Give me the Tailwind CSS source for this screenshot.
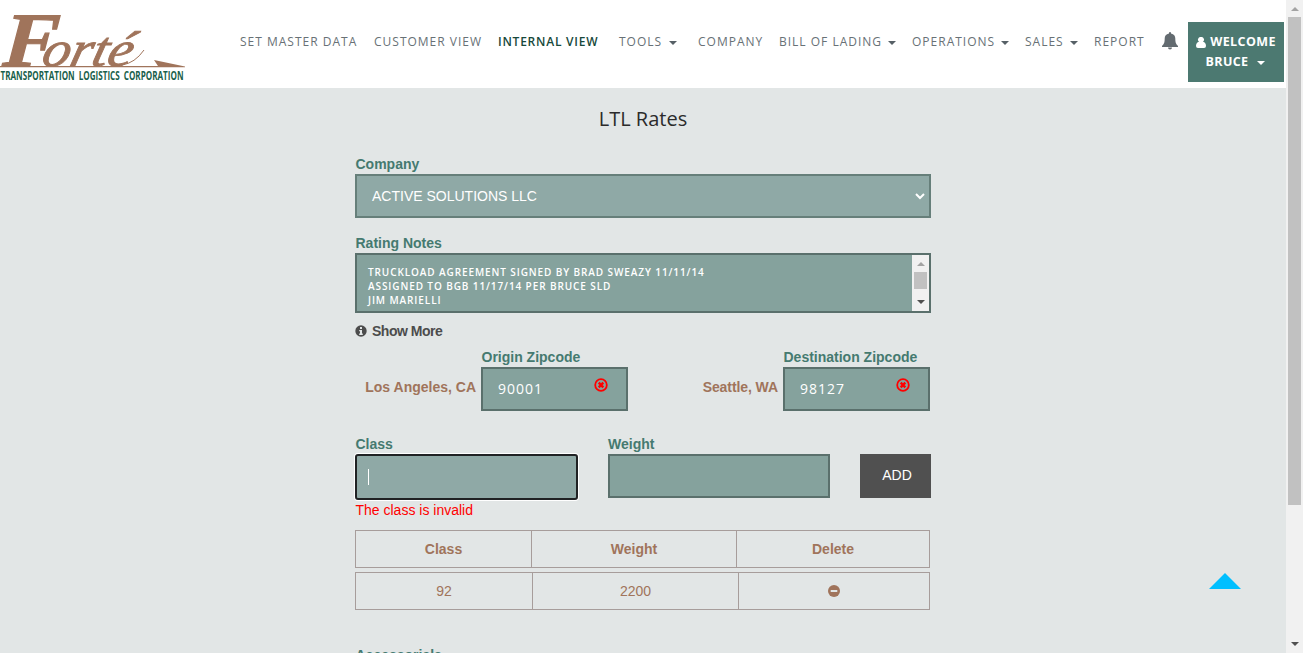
<!DOCTYPE html>
<html lang="en">
<head>
<meta charset="utf-8">
<title>LTL Rates</title>
<script src="https://cdn.jsdelivr.net/npm/@tailwindcss/browser@4"></script>
</head>
<body class="h-[653px] w-[1303px] overflow-hidden bg-[#e2e6e6] flex font-['Liberation_Sans',sans-serif] text-sm">
<div class="relative w-[1286px] h-[653px] overflow-hidden flex flex-col">
  <header class="h-[88px] shrink-0 bg-white flex items-start">
    <svg class="w-[240px] h-[88px] shrink-0" viewBox="0 0 240 88" role="img" aria-label="Forté Transportation Logistics Corporation">
      <g fill="#a0745b" font-family="'Liberation Serif',serif" font-style="italic">
        <text transform="translate(2 66) skewX(-4)" font-size="77" font-weight="bold" textLength="56" lengthAdjust="spacingAndGlyphs" stroke="#a0745b" stroke-width="1.200">F</text>
        <text transform="translate(40 66) skewX(-14)" font-size="50" textLength="90" lengthAdjust="spacingAndGlyphs" stroke="#a0745b" stroke-width="0.900">orté</text>
        <path d="M0 66h158l-4-6 31 6.600v.6H0z"/>
        <path d="M122 65q13-2 22-15" fill="none" stroke="#a0745b"/>
      </g>
      <text x="0.500" y="79.500" font-family="'Open Sans',sans-serif" font-weight="bold" font-size="12.500" fill="#1a5f4c" textLength="183" lengthAdjust="spacingAndGlyphs" word-spacing="3">TRANSPORTATION LOGISTICS CORPORATION</text>
    </svg>
    <nav class="flex items-start pt-[32px] h-[88px] text-[12px] leading-[20px] tracking-[1px] text-[#687176] font-['Open_Sans',sans-serif] whitespace-nowrap">
      <a class="w-[134px]">SET MASTER DATA</a>
      <a class="w-[124px]">CUSTOMER VIEW</a>
      <a class="w-[121px] font-semibold tracking-[0.770px] text-[#17493b]">INTERNAL VIEW</a>
      <a class="w-[79px] flex items-center gap-[7px]">TOOLS <i class="mt-[2px] border-x-4 border-x-transparent border-t-4 border-t-[#566066]"></i></a>
      <a class="w-[81px]">COMPANY</a>
      <a class="w-[133px] flex items-center gap-[6px]">BILL OF LADING <i class="mt-[2px] border-x-4 border-x-transparent border-t-4 border-t-[#566066]"></i></a>
      <a class="w-[113px] flex items-center gap-[6px]">OPERATIONS <i class="mt-[2px] border-x-4 border-x-transparent border-t-4 border-t-[#566066]"></i></a>
      <a class="w-[69px] flex items-center gap-[6px]">SALES <i class="mt-[2px] border-x-4 border-x-transparent border-t-4 border-t-[#566066]"></i></a>
      <a class="w-[68px]">REPORT</a>
      <svg class="w-4 h-[18px]" viewBox="0 0 16 18" fill="#636b70"><path d="M7 1a1 1 0 0 1 2 0v.5c3 .5 4.300 2.500 4.300 5 0 4.500 1 5.800 2.700 7.500v1H0v-1c1.700-1.700 2.700-3 2.700-7.500 0-2.500 1.300-4.500 4.300-5zM6 15.500h4a2 2 0 0 1-4 0z"/></svg>
    </nav>
    <div class="ml-[10px] mt-[22px] w-24 h-[60px] bg-[#4c7971] text-white font-bold text-[12.500px] leading-[20px] pt-[10px] font-['Open_Sans',sans-serif] tracking-[0.400px] flex flex-col items-center whitespace-nowrap">
      <div class="flex items-center gap-1"><svg class="w-[10px] h-[11px]" viewBox="0 0 10 11" fill="white"><path d="M5 0a2.700 2.700 0 0 1 2 4.800Q10 5.500 10 9q0 2-2 2H2Q0 11 0 9q0-3.500 3-4.200A2.700 2.700 0 0 1 5 0z"/></svg>WELCOME</div>
      <div class="flex items-center gap-2 pr-[2px]">BRUCE <i class="mt-px border-x-4 border-x-transparent border-t-4 border-t-white"></i></div>
    </div>
  </header>

  <main class="w-[576px] ml-[355px] flex flex-col text-[#457a70]">
    <h1 class="mt-4 h-[30px] leading-[30px] text-center text-[20px] text-[#2b2b2b] font-['Open_Sans',sans-serif]">LTL Rates</h1>
    <label class="mt-5 h-5 leading-5 pl-[0.500px] font-bold">Company</label>
    <div class="h-11 border-2 border-[#667f7a] bg-[#8fa9a6] text-white flex items-center justify-between pl-[15px] pr-1 text-[14px]">
      <span>ACTIVE SOLUTIONS LLC</span>
      <svg class="w-[10px] h-[7px]" viewBox="0 0 10 7" fill="none" stroke="white" stroke-width="2"><path d="M1 1l4 4 4-4"/></svg>
    </div>
    <label class="mt-[15px] h-5 leading-5 pl-[0.500px] font-bold">Rating Notes</label>
    <div class="h-[60px] border-2 border-[#5a706c] bg-[#85a29d] flex justify-between text-white">
      <p class="pl-[11px] pt-[10px] text-[10px] leading-[14px] tracking-[0.900px] font-semibold font-['Open_Sans',sans-serif]">TRUCKLOAD AGREEMENT SIGNED BY BRAD SWEAZY 11/11/14<br>ASSIGNED TO BGB 11/17/14 PER BRUCE SLD<br>JIM MARIELLI</p>
      <div class="w-[17px] bg-[#f1f1f1] flex flex-col items-center">
        <i class="mt-[7px] border-x-4 border-x-transparent border-b-4 border-b-[#a3a3a3]"></i>
        <span class="mt-[6px] w-[13px] h-[17px] bg-[#c1c1c1]"></span>
        <i class="mt-[11px] border-x-4 border-x-transparent border-t-4 border-t-[#505050]"></i>
      </div>
    </div>
    <div class="mt-2 h-5 flex items-center gap-[5px] font-bold tracking-[-0.500px] text-[14px] text-[#4c4c4c]">
      <svg class="w-[12px] h-[12px]" viewBox="0 0 12 12"><circle cx="6" cy="6" r="5.700" fill="#4c4c4c"/><path d="M5 2h2v2H5zM4.200 5H7v3.500h.8V10H4.200V8.500H5V6.300h-.8z" fill="#e2e6e6"/></svg>Show More
    </div>
    <div class="mt-[6px] h-16 flex font-bold">
      <span class="w-[126px] pt-[30px] pr-[5px] leading-5 text-right text-[#a0745b]">Los Angeles, CA</span>
      <div class="w-[147px] flex flex-col">
        <label class="h-5 leading-5 pl-[0.500px] whitespace-nowrap">Origin Zipcode</label>
        <div class="h-11 border-2 border-[#5a706c] bg-[#85a29d] flex pl-[15px] pr-[18px] justify-between font-normal font-['Open_Sans',sans-serif] text-white tracking-[1px] leading-[40px]">90001
          <svg class="mt-[9px] w-[14px] h-[14px]" viewBox="0 0 14 14" fill="none" stroke="red" stroke-width="2"><circle cx="7" cy="7" r="5.800" stroke-width="1.800"/><path d="M4.700 4.700l4.600 4.600M9.300 4.700L4.700 9.300" stroke-width="2.400"/></svg>
        </div>
      </div>
      <span class="w-[155px] pt-[30px] pr-[5px] leading-5 text-right tracking-[-0.080px] text-[#a0745b]">Seattle, WA</span>
      <div class="w-[147px] flex flex-col">
        <label class="h-5 leading-5 pl-[0.500px] whitespace-nowrap">Destination Zipcode</label>
        <div class="h-11 border-2 border-[#5a706c] bg-[#85a29d] flex pl-[15px] pr-[18px] justify-between font-normal font-['Open_Sans',sans-serif] text-white tracking-[1px] leading-[40px]">98127
          <svg class="mt-[9px] w-[14px] h-[14px]" viewBox="0 0 14 14" fill="none" stroke="red" stroke-width="2"><circle cx="7" cy="7" r="5.800" stroke-width="1.800"/><path d="M4.700 4.700l4.600 4.600M9.300 4.700L4.700 9.300" stroke-width="2.400"/></svg>
        </div>
      </div>
    </div>
    <div class="mt-[23px] h-[86px] flex">
      <div class="w-[223px] flex flex-col">
        <label class="h-5 leading-5 pl-[0.500px] font-bold">Class</label>
        <div class="h-[46px] border-2 border-[#202224] rounded-[3px] bg-[#8fa9a6] ring-1 ring-white flex items-center pl-[11px]"><i class="w-px h-4 bg-white"></i></div>
        <span class="h-5 leading-5 pl-[0.500px] text-[#f00]">The class is invalid</span>
      </div>
      <div class="ml-[30px] w-[222px] flex flex-col">
        <label class="h-5 leading-5 font-bold">Weight</label>
        <div class="h-11 border-2 border-[#5a706c] bg-[#85a29d]"></div>
      </div>
      <button class="ml-[30px] mt-5 w-[71px] h-11 pb-[2px] pl-[3px] bg-[#505050] text-white">ADD</button>
    </div>
    <div class="mt-[10px] w-[575px] h-[38px] border border-[#a79d9b] flex text-center font-bold leading-[36px] text-[#a0745b]">
      <span class="w-44 border-r border-[#a79d9b]">Class</span>
      <span class="w-[205px] border-r border-[#a79d9b]">Weight</span>
      <span class="flex-1">Delete</span>
    </div>
    <div class="mt-1 w-[575px] h-[38px] border border-[#a79d9b] flex text-center leading-[36px] text-[#a0745b]">
      <span class="w-[177px] border-r border-[#a79d9b]">92</span>
      <span class="w-[206px] border-r border-[#a79d9b]">2200</span>
      <span class="flex-1 flex items-center justify-center"><svg class="w-3 h-3" viewBox="0 0 12 12"><circle cx="6" cy="6" r="6" fill="#a0745b"/><path d="M2.700 5h6.600v2H2.700z" fill="#e2e6e6"/></svg></span>
    </div>
    <label class="mt-[35px] h-5 shrink-0 leading-5 pl-[0.500px] font-bold">Accessorials</label>
  </main>
  <a class="absolute left-[1209px] top-[573px] border-x-16 border-x-transparent border-b-16 border-b-[#00bfff]"></a>
</div>
<div class="w-[17px] h-[653px] bg-[#f1f1f1] flex flex-col items-center">
  <i class="mt-[7px] border-x-4 border-x-transparent border-b-4 border-b-[#a3a3a3]"></i>
  <span class="mt-[6px] w-[13px] h-[488px] bg-[#c1c1c1]"></span>
  <i class="mt-[137px] border-x-4 border-x-transparent border-t-4 border-t-[#505050]"></i>
</div>
</body>
</html>
